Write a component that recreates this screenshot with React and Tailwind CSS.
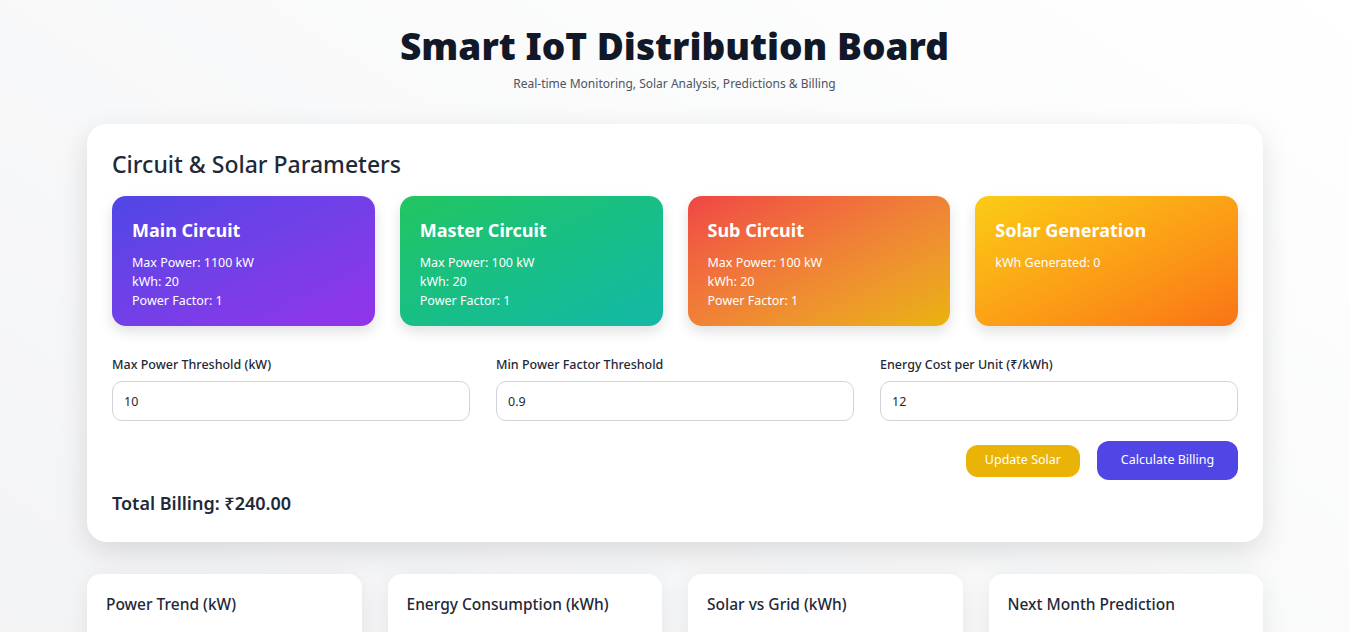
import { useState } from 'react'

const circuits = [
  {
    name: 'Main Circuit',
    bg: 'bg-gradient-to-br from-[#4f46e5] to-[#9333ea]',
    lines: ['Max Power: 1100 kW', 'kWh: 20', 'Power Factor: 1'],
  },
  {
    name: 'Master Circuit',
    bg: 'bg-gradient-to-br from-[#22c55e] to-[#14b8a6]',
    lines: ['Max Power: 100 kW', 'kWh: 20', 'Power Factor: 1'],
  },
  {
    name: 'Sub Circuit',
    bg: 'bg-gradient-to-br from-[#ef4444] to-[#eab308]',
    lines: ['Max Power: 100 kW', 'kWh: 20', 'Power Factor: 1'],
  },
  {
    name: 'Solar Generation',
    bg: 'bg-gradient-to-br from-[#facc15] to-[#f97316]',
    lines: ['kWh Generated: 0'],
  },
]

const charts = ['Power Trend (kW)', 'Energy Consumption (kWh)', 'Solar vs Grid (kWh)', 'Next Month Prediction']

export default function App() {
  const [maxPower, setMaxPower] = useState('10')
  const [minPf, setMinPf] = useState('0.9')
  const [cost, setCost] = useState('12')

  return (
    <div className="min-h-screen bg-gradient-to-bl from-white to-[#f1f2f4] font-['Noto_Sans','Open_Sans',sans-serif] text-[#1f2937] pb-10">
      {/* Header */}
      <div className="pt-[22px] text-center">
        <h1 className="text-[37px] leading-[48px] font-black text-[#111827]">Smart IoT Distribution Board</h1>
        <p className="mt-[5px] text-[12px] text-[#4b5563]">Real-time Monitoring, Solar Analysis, Predictions &amp; Billing</p>
      </div>

      <div className="w-[1177px] mx-auto mt-[31px] pl-px">
        {/* Parameters card */}
        <div className="bg-white rounded-[20px] shadow-[0_10px_30px_rgba(0,0,0,0.12)] px-[25px] pt-[24px] pb-[26px]">
          <h2 className="text-[23px] leading-[32px] font-medium text-[#1f2937]">Circuit &amp; Solar Parameters</h2>

          <div className="grid grid-cols-4 gap-[25px] mt-[16px]">
            {circuits.map((c) => (
              <div key={c.name} className={`${c.bg} h-[130px] rounded-[14px] px-[20px] pt-[21px] text-white shadow-[0_6px_14px_rgba(0,0,0,0.12)]`}>
                <h3 className="text-[18px] leading-[26px] font-bold">{c.name}</h3>
                <div className="mt-[10px] text-[12.5px] leading-[19px]">
                  {c.lines.map((l) => (
                    <p key={l}>{l}</p>
                  ))}
                </div>
              </div>
            ))}
          </div>

          {/* Inputs */}
          <div className="grid grid-cols-3 gap-[26px] mt-[30px]">
            <label className="block">
              <span className="block text-[12.5px] font-medium leading-[18px] text-[#1f2937]">Max Power Threshold (kW)</span>
              <input value={maxPower} onChange={(e) => setMaxPower(e.target.value)} className="mt-[7px] w-full h-[40px] px-[11px] text-[12.5px] border border-[#d1d5db] rounded-[10px] outline-none" />
            </label>
            <label className="block">
              <span className="block text-[12.5px] font-medium leading-[18px] text-[#1f2937]">Min Power Factor Threshold</span>
              <input value={minPf} onChange={(e) => setMinPf(e.target.value)} className="mt-[7px] w-full h-[40px] px-[11px] text-[12.5px] border border-[#d1d5db] rounded-[10px] outline-none" />
            </label>
            <label className="block">
              <span className="block text-[12.5px] font-medium leading-[18px] text-[#1f2937]">Energy Cost per Unit (₹/kWh)</span>
              <input value={cost} onChange={(e) => setCost(e.target.value)} className="mt-[7px] w-full h-[40px] px-[11px] text-[12.5px] border border-[#d1d5db] rounded-[10px] outline-none" />
            </label>
          </div>

          {/* Buttons */}
          <div className="flex justify-end items-center gap-[17px] mt-[20px]">
            <button className="h-[32px] px-[19px] bg-[#eab308] text-white text-[12.5px] rounded-[12px]">Update Solar</button>
            <button className="h-[39px] w-[141px] bg-[#4f46e5] text-white text-[12.5px] rounded-[12px]">Calculate Billing</button>
          </div>

          <p className="mt-[10px] text-[18px] leading-[26px] font-semibold text-[#1f2937]">Total Billing: ₹240.00</p>
        </div>

        {/* Charts */}
        <div className="grid grid-cols-4 gap-[26px] mt-[32px]">
          {charts.map((t) => (
            <div key={t} className="bg-white rounded-[14px] shadow-[0_6px_24px_rgba(0,0,0,0.08)] h-[240px] px-[19px] pt-[19px]">
              <h4 className="text-[15.5px] leading-[22px] font-medium text-[#1f2937]">{t}</h4>
            </div>
          ))}
        </div>
      </div>
    </div>
  )
}
